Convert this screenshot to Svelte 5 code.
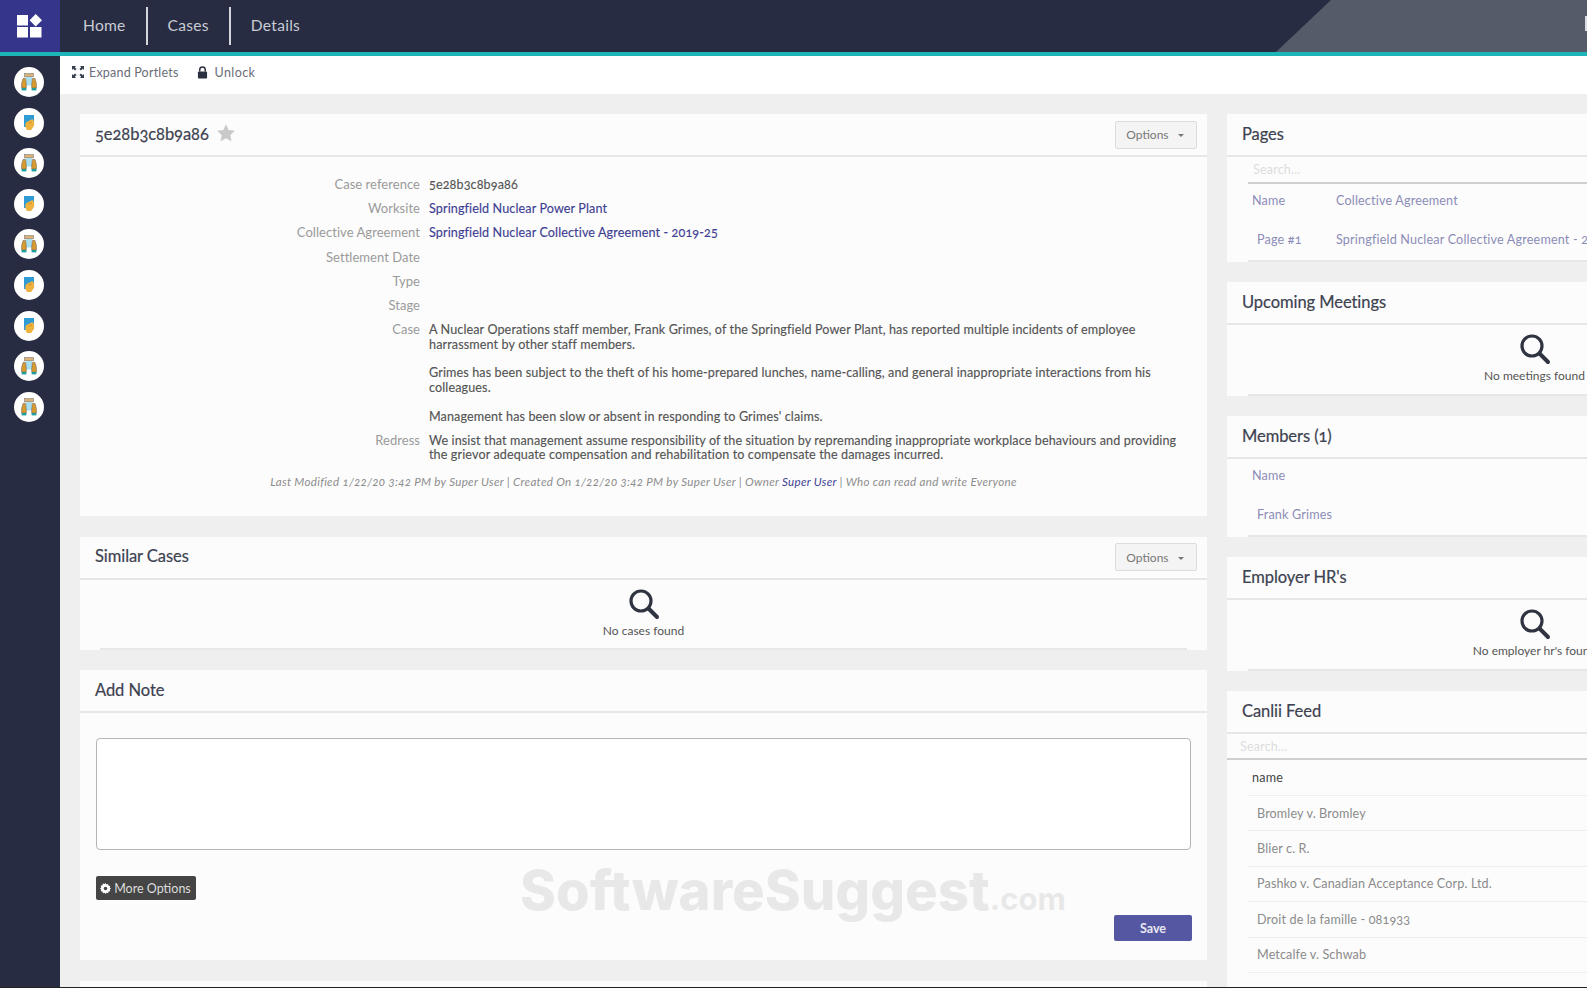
<script>
  const rail = ['a','b','a','b','a','b','b','a','a'];
  const feed = ['Bromley v. Bromley','Blier c. R.','Pashko v. Canadian Acceptance Corp. Ltd.','Droit de la famille - 081933','Metcalfe v. Schwab'];
</script>

{#snippet search()}
  <svg class="glass" viewBox="0 0 32 32" aria-hidden="true">
    <circle cx="13" cy="13" r="10" fill="none" stroke="#2f3440" stroke-width="3.2"/>
    <path d="M20.5 20.5 29 29" stroke="#2f3440" stroke-width="4" stroke-linecap="round"/>
  </svg>
{/snippet}

{#snippet options()}
  <button class="opt">Options <i></i></button>
{/snippet}

<div class="page">
  <header class="top">
    <div class="logo">
      <svg viewBox="0 0 26 24" width="26" height="24" aria-hidden="true">
        <rect x="0" y="1" width="11" height="10.5" fill="#fff"/>
        <path d="M18.7 0 25 6.2 18.7 12.4 12.6 6.2Z" fill="#fff"/>
        <rect x="0" y="13" width="11" height="10.5" fill="#fff"/>
        <rect x="13" y="13" width="11.5" height="10.5" fill="#fff"/>
      </svg>
    </div>
    <nav>
      <a href="#h">Home</a>
      <a href="#c">Cases</a>
      <a href="#d">Details</a>
    </nav>
    <div class="slant"></div>
    <div class="edge"></div>
  </header>

  <div class="body">
    <aside>
      {#each rail as r}
        <span class="dot">
          {#if r === 'a'}
            <svg viewBox="0 0 20 20" width="20" height="20" aria-hidden="true">
              <rect x="5.5" y="1.5" width="9" height="3.4" fill="#d9b27a" stroke="#6d6a68" stroke-width=".5"/>
              <rect x="7" y="5" width="6" height="8.5" fill="#a9dfef"/>
              <path d="M4 6.5h2.6l.7 6v3.5H2.6v-4.5Z" fill="#d99a2e" stroke="#5d5a55" stroke-width=".5"/>
              <path d="M16 6.5h-2.6l-.7 6v3.5h4.7v-4.5Z" fill="#d99a2e" stroke="#5d5a55" stroke-width=".5"/>
              <rect x="2.6" y="16" width="4.8" height="2.4" fill="#1f9d9c"/>
              <rect x="12.6" y="16" width="4.8" height="2.4" fill="#1f9d9c"/>
            </svg>
          {:else}
            <svg viewBox="0 0 20 20" width="20" height="20" aria-hidden="true">
              <path d="M5 2h10v7l-5 5H5Z" fill="#2f9bd4"/>
              <path d="M7.5 9l6-3 1.6 2.5v4.2l-3 4.3H8l-1.6-3v-3.3Z" fill="#eeb23f"/>
              <path d="M9.5 10.2l3.5-1.4" stroke="#c98c22" stroke-width=".8"/>
            </svg>
          {/if}
        </span>
      {/each}
    </aside>

    <main>
      <div class="tools">
        <span class="tool">
          <svg viewBox="0 0 12 12" width="12" height="12" aria-hidden="true">
            <path d="M0 0h4L2.8 1.2 4.6 3 3 4.6 1.2 2.8 0 4ZM12 0v4l-1.2-1.2L9 4.6 7.4 3l1.8-1.8L8 0ZM0 12V8l1.2 1.2L3 7.4 4.6 9l-1.8 1.8L4 12ZM12 12H8l1.2-1.2L7.4 9 9 7.4l1.8 1.8L12 8Z" fill="#3a3f4e"/>
          </svg>
          Expand Portlets
        </span>
        <span class="tool lock">
          <svg viewBox="0 0 12 14" width="11" height="13" aria-hidden="true">
            <path d="M3 6V4a3 3 0 0 1 6 0v2" fill="none" stroke="#2b3040" stroke-width="1.6"/>
            <rect x="1" y="6" width="10" height="7.5" rx="1" fill="#2b3040"/>
          </svg>
          Unlock
        </span>
      </div>

      <div class="grid">
        <div class="col left">
          <section class="card c1">
            <div class="hd">
              <h2 class="case-id">5e28b3c8b9a86</h2>
              <svg class="star" viewBox="0 0 24 24" width="20" height="20" aria-hidden="true">
                <path d="M12 1.5l3.2 6.9 7.5.9-5.5 5.2 1.4 7.5L12 18.4l-6.6 3.6 1.4-7.5L1.3 9.3l7.5-.9Z" fill="#c9c9c9"/>
              </svg>
              {@render options()}
            </div>
            <dl>
              <dt>Case reference</dt><dd class="num">5e28b3c8b9a86</dd>
              <dt>Worksite</dt><dd><a href="#w">Springfield Nuclear Power Plant</a></dd>
              <dt>Collective Agreement</dt><dd><a href="#a">Springfield Nuclear Collective Agreement - 2019-25</a></dd>
              <dt>Settlement Date</dt><dd></dd>
              <dt>Type</dt><dd></dd>
              <dt>Stage</dt><dd></dd>
              <dt>Case</dt>
              <dd class="long">A Nuclear Operations staff member, Frank Grimes, of the Springfield Power Plant, has reported multiple incidents of employee<br>harrassment by other staff members.<br><br>Grimes has been subject to the theft of his home-prepared lunches, name-calling, and general inappropriate interactions from his<br>colleagues.<br><br>Management has been slow or absent in responding to Grimes' claims.</dd>
              <dt>Redress</dt>
              <dd class="long">We insist that management assume responsibility of the situation by repremanding inappropriate workplace behaviours and providing<br>the grievor adequate compensation and rehabilitation to compensate the damages incurred.</dd>
            </dl>
            <p class="meta">Last Modified 1/22/20 3:42 PM by Super User | Created On 1/22/20 3:42 PM by Super User | Owner <a href="#u">Super User</a> | Who can read and write Everyone</p>
          </section>

          <section class="card c2">
            <div class="hd"><h2>Similar Cases</h2>{@render options()}</div>
            <div class="empty wide">{@render search()}<span>No cases found</span></div>
          </section>

          <section class="card c3">
            <div class="hd"><h2>Add Note</h2></div>
            <div class="note">
              <div class="area"></div>
              <button class="more">
                <svg viewBox="0 0 12 12" width="11" height="11" aria-hidden="true">
                  <path d="M6 0l1 1.6 1.9-.5.4 1.9 1.9.4-.5 1.9L12 6l-1.3 1 .5 1.9-1.9.4-.4 1.9-1.9-.5L6 12l-1-1.3-1.9.5-.4-1.9-1.9-.4.5-1.9L0 6l1.3-1.2-.5-1.9 1.9-.4.4-1.9 1.9.5Z" fill="#fff"/>
                  <circle cx="6" cy="6" r="1.9" fill="#444"/>
                </svg>
                More Options
              </button>
              <div class="save-row"><button class="save">Save</button></div>
            </div>
          </section>

          <section class="card c4"></section>
        </div>

        <div class="col">
          <section class="card">
            <div class="hd"><h2>Pages</h2></div>
            <div class="find inset">Search...</div>
            <div class="pgrow head"><span>Name</span><span>Collective Agreement</span></div>
            <div class="pgrow data"><span>Page #1</span><span>Springfield Nuclear Collective Agreement - 2019-25</span></div>
          </section>

          <section class="card">
            <div class="hd"><h2>Upcoming Meetings</h2></div>
            <div class="empty side">{@render search()}<span>No meetings found</span></div>
          </section>

          <section class="card">
            <div class="hd"><h2>Members (1)</h2></div>
            <div class="pgrow head"><span>Name</span></div>
            <div class="pgrow data"><span>Frank Grimes</span></div>
          </section>

          <section class="card">
            <div class="hd"><h2>Employer HR's</h2></div>
            <div class="empty side">{@render search()}<span>No employer hr's found</span></div>
          </section>

          <section class="card feed">
            <div class="hd"><h2>Canlii Feed</h2></div>
            <div class="find">Search...</div>
            <div class="feedhead">name</div>
            {#each feed as f}
              <div class="feedrow">{f}</div>
            {/each}
          </section>
        </div>
      </div>
    </main>
  </div>

  <div class="mark">SoftwareSuggest<small>.com</small></div>
  <div class="foot"></div>
</div>

<style>
  :global(body) { margin: 0; background: #efefef; }
  .page {
    position: relative;
    width: 1587px;
    height: 988px;
    overflow: hidden;
    font-family: Lato, "Open Sans", sans-serif;
    font-size: 13px;
    font-variant-numeric: oldstyle-nums;
    color: #555;
    background: #efefef;
  }
  .top {
    position: relative;
    display: flex;
    height: 52px;
    background: #272c42;
    border-bottom: 4px solid #1db5b8;
  }
  .logo {
    width: 60px;
    display: flex;
    align-items: center;
    justify-content: center;
    background: #36358c;
  }
  nav { display: flex; align-items: center; margin-left: 1px; }
  nav a {
    display: flex;
    align-items: center;
    height: 38px;
    padding: 0 20px 3px 20px;
    box-sizing: border-box;
    color: #c9cbd3;
    font-size: 15.6px;
    text-decoration: none;
    border-right: 2px solid #d5d6dc;
    letter-spacing: .26px;
  }
  nav a:first-child { padding-left: 22px; }
  nav a:last-child { border-right: 0; }
  .slant {
    position: absolute;
    top: 0; bottom: -4px; right: 0;
    width: 311px;
    background: #565b6a;
    clip-path: polygon(55px 0, 100% 0, 100% 52px, 0 52px);
  }
  .edge { position: absolute; right: 0; top: 16px; width: 2px; height: 15px; background: #dcdde2; }
  .body { display: flex; height: 932px; }
  aside {
    flex: none;
    width: 60px;
    background: #272c42;
    display: flex;
    flex-direction: column;
    align-items: center;
    gap: 10.6px;
    padding-top: 11px;
    padding-right: 2px;
    box-sizing: border-box;
  }
  .dot {
    width: 30px; height: 30px;
    border-radius: 50%;
    background: #fff;
    display: flex; align-items: center; justify-content: center;
  }
  main { flex: 1; min-width: 0; }
  .tools {
    height: 38px;
    box-sizing: border-box;
    background: #fff;
    display: flex;
    align-items: center;
    gap: 18px;
    padding: 0 0 6px 12px;
    font-size: 12.5px;
    color: #6a6d78;
    letter-spacing: .2px;
  }
  .tool { display: flex; align-items: center; gap: 5px; }
  .lock { gap: 7px; letter-spacing: .4px; }
  .grid {
    display: grid;
    grid-template-columns: 1127px 616px;
    gap: 20px;
    padding: 20px 0 0 20px;
  }
  .col { display: flex; flex-direction: column; gap: 20px; }
  .left { gap: 20.5px; }
  .card { background: #fcfcfc; }
  .hd {
    display: flex;
    align-items: center;
    height: 41px;
    padding: 0 10px 0 15px;
    border-bottom: 2px solid #e7e7e7;
  }
  h2 {
    margin: 0 0 2px;
    font-size: 16.5px;
    font-weight: 400;
    color: #3d4250;
    letter-spacing: -.06px;
    -webkit-text-stroke: .2px #3d4250;
  }
  .star { margin-left: 7px; margin-top: -4px; }
  .opt {
    margin-left: auto;
    width: 82px;
    height: 28px;
    background: #f4f4f4;
    border: 1px solid #dcdcdc;
    border-radius: 2px;
    color: #777;
    font: inherit;
    font-size: 12px;
    padding: 0 2px 0 0;
  }
  .opt i {
    display: inline-block;
    margin-left: 6px;
    vertical-align: 2px;
    border: 3px solid transparent;
    border-top-color: #777;
    border-bottom: 0;
  }
  .c1 { height: 402px; }
  dl {
    display: grid;
    grid-template-columns: 340px 1fr;
    column-gap: 9px;
    margin: 0;
    padding: 20px 0 0 0;
    line-height: 14.4px;
    letter-spacing: .11px;
  }
  dt { text-align: right; color: #9a9a9a; padding-bottom: 9.8px; letter-spacing: .04px; }
  dd { margin: 0; padding-top: 1px; min-height: 14.4px; font-size: 12.6px; }
  dd a { color: #3f3f93; text-decoration: none; -webkit-text-stroke: .15px #3f3f93; }
  .long { padding-bottom: 8.8px; white-space: nowrap; -webkit-text-stroke: .15px #555; }
  .num { -webkit-text-stroke: .15px #555; }
  .meta {
    margin: 4px 0 0;
    text-align: center;
    font-size: 11.6px;
    font-style: italic;
    color: #8d8d8d;
    letter-spacing: .29px;
  }
  .meta a { color: #3f3f93; text-decoration: none; }
  .c2 { height: 113px; }
  .empty {
    display: flex;
    flex-direction: column;
    align-items: center;
    font-size: 12px;
    color: #555;
    border-bottom: 2px solid #e7e7e7;
    box-sizing: border-box;
    height: 70px;
    padding-top: 8px;
  }
  .empty.wide { margin: 0 20px; }
  .empty span { margin-top: 3px; line-height: 16px; }
  .empty.side { margin-left: 21px; height: 71px; width: 573px; }
  .glass { width: 32px; height: 32px; }
  .c3 { height: 290px; }
  .note { padding: 25px 16px 0 15.5px; display: flex; flex-direction: column; align-items: flex-start; }
  .area {
    align-self: stretch;
    height: 110px;
    background: #fff;
    border: 1px solid #b5b5b5;
    border-radius: 4px;
  }
  .more {
    margin-top: 26px;
    height: 24px;
    width: 100px;
    display: flex;
    align-items: center;
    justify-content: center;
    gap: 3px;
    padding: 0;
    background: #454545;
    border: 0;
    border-radius: 2px;
    color: #ddd;
    font: inherit;
    font-size: 12.5px;
  }
  .save-row { align-self: stretch; display: flex; justify-content: flex-end; margin-top: 15px; margin-right: -1px; }
  .save {
    width: 78px;
    height: 26px;
    background: #5657a3;
    border: 0;
    border-radius: 2px;
    color: #e8e8f2;
    font: inherit;
    font-size: 12.5px;
    font-weight: 700;
  }
  .c4 { height: 40px; }
  .find {
    height: 24px;
    padding: 0 13px;
    display: flex;
    align-items: center;
    color: #dcdcdc;
    font-size: 12.5px;
    border-bottom: 2px solid #cfcfcf;
    letter-spacing: .2px;
  }
  .find.inset { margin-left: 21px; padding-left: 5px; height: 25px; }
  .pgrow {
    margin-left: 21px;
    display: grid;
    grid-template-columns: 88px 1fr;
    font-size: 12.6px;
    color: #8c8cb8;
    letter-spacing: .17px;
  }
  .pgrow span:first-child { padding-left: 4px; }
  .head { height: 36px; box-sizing: border-box; padding-bottom: 3px; align-items: center; }
  .data { height: 42px; align-items: center; border-bottom: 2px solid #e7e7e7; box-sizing: border-box; padding-bottom: 2px; }
  .data span:first-child { padding-left: 9px; }
  .data:has(> :only-child) { grid-template-columns: 1fr; }
  .feed { padding-bottom: 40px; }
  .feedhead {
    margin-left: 21px;
    height: 35px;
    display: flex;
    align-items: center;
    padding-left: 4px;
    color: #444;
    font-size: 12.6px;
    letter-spacing: .2px;
    border-bottom: 1px solid #efefef;
  }
  .feedrow {
    margin-left: 21px;
    height: 34.4px;
    display: flex;
    align-items: center;
    padding-left: 9px;
    color: #8b8b8b;
    font-size: 12.6px;
    letter-spacing: .13px;
    border-bottom: 1px solid #efefef;
  }
  .mark {
    position: absolute;
    left: 520px;
    top: 855px;
    font-family: Inter, "Open Sans", sans-serif;
    font-size: 54.5px;
    font-weight: 800;
    line-height: 70px;
    color: #000;
    opacity: .075;
    white-space: nowrap;
    pointer-events: none;
  }
  .mark small { font-size: 31px; font-weight: 700; }
  .foot { position: absolute; left: 0; right: 0; bottom: 0; height: 1px; background: #222; }
</style>
